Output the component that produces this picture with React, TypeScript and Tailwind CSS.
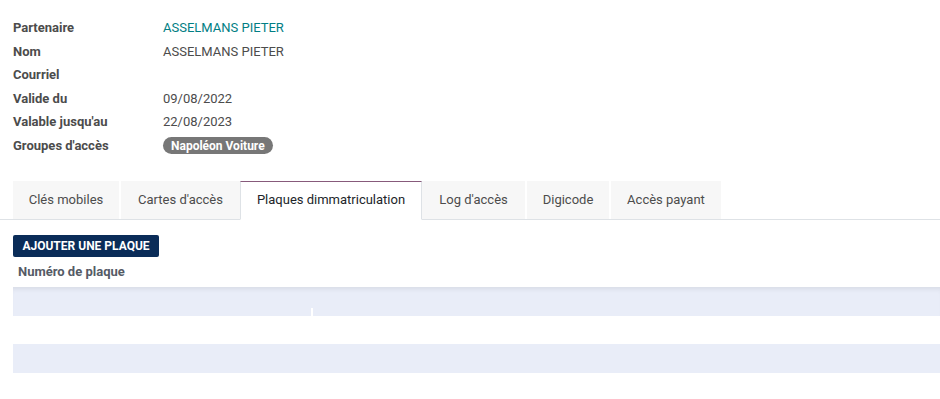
import React from 'react';

const fields = [
    { label: 'Partenaire', value: 'ASSELMANS PIETER', link: true },
    { label: 'Nom', value: 'ASSELMANS PIETER' },
    { label: 'Courriel', value: '' },
    { label: 'Valide du', value: '09/08/2022' },
    { label: "Valable jusqu'au", value: '22/08/2023' },
];

const tabs = [
    { name: 'Clés mobiles', cls: 'w-[106px] mr-[2px]' },
    { name: "Cartes d'accès", cls: 'w-[119px]' },
    { name: 'Plaques dimmatriculation', cls: 'w-[182px]', active: true },
    { name: "Log d'accès", cls: 'w-[103px] mr-[2px]' },
    { name: 'Digicode', cls: 'w-[82px] mr-[2px]' },
    { name: 'Accès payant', cls: 'w-[110px]' },
];

const App: React.FC = () => {
    return (
        <div className="w-[940px] h-[399px] overflow-hidden bg-white text-[13px] text-[#4c4c4c] font-['Roboto',sans-serif]">
            {/* Form fields */}
            <div className="pt-[16px] pl-[13px]">
                {fields.map((f) => (
                    <div key={f.label} className="flex items-center h-[23.6px]">
                        <span className="w-[150px] font-bold">{f.label}</span>
                        <span className={f.link ? 'text-[#017e84]' : ''}>{f.value}</span>
                    </div>
                ))}
                <div className="flex items-center h-[23.6px]">
                    <span className="w-[150px] font-bold">Groupes d'accès</span>
                    <span className="inline-flex items-center h-[17px] px-[8px] rounded-full bg-[#777777] text-white text-[12px] font-bold">
                        Napoléon Voiture
                    </span>
                </div>
            </div>

            {/* Tabs */}
            <div className="mt-[23px] flex border-b border-[#dee2e6] pl-[13px] h-[39px]">
                {tabs.map((t) =>
                    t.active ? (
                        <div
                            key={t.name}
                            className={`${t.cls} -mb-px flex items-center justify-center bg-white border border-[#dee2e6] border-t-[#875a7b] border-b-white text-[#212529]`}
                        >
                            {t.name}
                        </div>
                    ) : (
                        <div
                            key={t.name}
                            className={`${t.cls} flex items-center justify-center bg-[#f7f7f7] text-[#4c4c4c]`}
                        >
                            {t.name}
                        </div>
                    )
                )}
            </div>

            {/* Plates list */}
            <div className="pl-[13px] pt-[15px]">
                <button className="h-[22px] w-[146px] rounded-[2px] bg-[#0a2c58] text-white text-[12px] font-bold uppercase">
                    Ajouter une plaque
                </button>
                <div className="h-[30px] flex items-center pl-[5px] font-bold text-[#555b66]">Numéro de plaque</div>
                <div className="relative h-[29px] bg-[#e9edf8] shadow-[inset_0_5px_5px_-3px_rgba(0,0,0,0.08)]">
                    <div className="absolute left-[298px] bottom-0 w-[2px] h-[8px] bg-white" />
                </div>
                <div className="h-[28px] bg-white" />
                <div className="h-[29px] bg-[#e9edf8]" />
            </div>
        </div>
    );
};

export default App;
